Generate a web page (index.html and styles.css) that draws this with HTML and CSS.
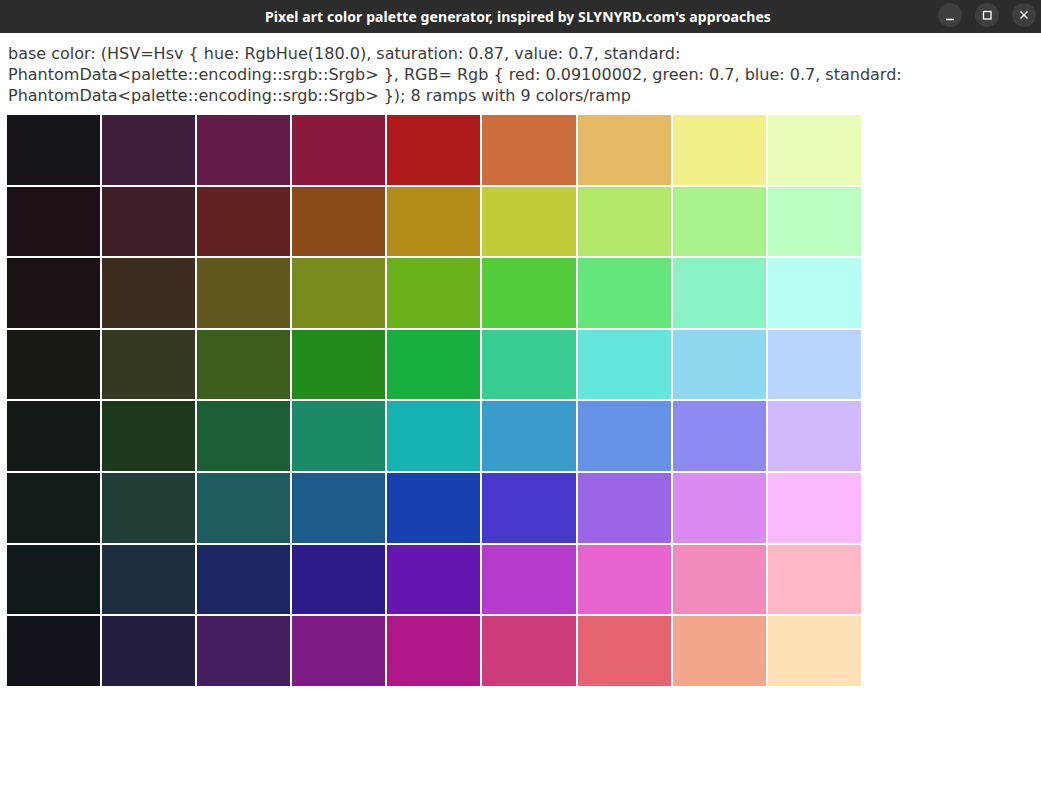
FILE: index.html
```html
<!DOCTYPE html>
<html>
<head>
<meta charset="utf-8">
<link rel="stylesheet" href="styles.css">
</head>
<body>
<div class="titlebar">
  <div class="title">Pixel art color palette generator, inspired by SLYNYRD.com's approaches</div>
  <div class="controls">
    <div class="btn"><svg width="24" height="24" viewBox="0 0 24 24"><path d="M8 16.5h8" stroke="#fff" stroke-width="1.5"/></svg></div>
    <div class="btn"><svg width="24" height="24" viewBox="0 0 24 24"><rect x="8.5" y="8.5" width="7.5" height="7.5" fill="none" stroke="#fff" stroke-width="1.3"/></svg></div>
    <div class="btn"><svg width="24" height="24" viewBox="0 0 24 24"><path d="M8.5 8.5l7 7M15.5 8.5l-7 7" stroke="#fff" stroke-width="1.5"/></svg></div>
  </div>
</div>
<main class="content">
  <p class="info">base color: (HSV=Hsv { hue: RgbHue(180.0), saturation: 0.87, value: 0.7, standard:<br>PhantomData&lt;palette::encoding::srgb::Srgb&gt; }, RGB= Rgb { red: 0.09100002, green: 0.7, blue: 0.7, standard:<br>PhantomData&lt;palette::encoding::srgb::Srgb&gt; }); 8 ramps with 9 colors/ramp</p>
  <div class="grid">
    <div class="c" style="background:#17131b"></div><div class="c" style="background:#3f1e3e"></div><div class="c" style="background:#621c4a"></div><div class="c" style="background:#8a1b3c"></div><div class="c" style="background:#ae1919"></div><div class="c" style="background:#cd6c3c"></div><div class="c" style="background:#e6b965"></div><div class="c" style="background:#f1ef8a"></div><div class="c" style="background:#e9fdb8"></div>
    <div class="c" style="background:#1a1015"></div><div class="c" style="background:#3d1f25"></div><div class="c" style="background:#61221e"></div><div class="c" style="background:#8b4a18"></div><div class="c" style="background:#b48b18"></div><div class="c" style="background:#c3cd3b"></div><div class="c" style="background:#b4e86a"></div><div class="c" style="background:#a8f28b"></div><div class="c" style="background:#baffbf"></div>
    <div class="c" style="background:#1a1212"></div><div class="c" style="background:#3e2d1f"></div><div class="c" style="background:#62581e"></div><div class="c" style="background:#788b1d"></div><div class="c" style="background:#68b11b"></div><div class="c" style="background:#53cd3b"></div><div class="c" style="background:#64e67a"></div><div class="c" style="background:#8af3c3"></div><div class="c" style="background:#b8fff3"></div>
    <div class="c" style="background:#191913"></div><div class="c" style="background:#363822"></div><div class="c" style="background:#3b5e1d"></div><div class="c" style="background:#238a1b"></div><div class="c" style="background:#17b03e"></div><div class="c" style="background:#3acd92"></div><div class="c" style="background:#65e6dd"></div><div class="c" style="background:#8fd9f0"></div><div class="c" style="background:#b8d6fd"></div>
    <div class="c" style="background:#131a16"></div><div class="c" style="background:#1d3a1f"></div><div class="c" style="background:#1c5e36"></div><div class="c" style="background:#1b8a69"></div><div class="c" style="background:#17b3b3"></div><div class="c" style="background:#3b9bcc"></div><div class="c" style="background:#6591e6"></div><div class="c" style="background:#8d8bf2"></div><div class="c" style="background:#d2b8fd"></div>
    <div class="c" style="background:#121c19"></div><div class="c" style="background:#203d37"></div><div class="c" style="background:#1f5c61"></div><div class="c" style="background:#1c5b8b"></div><div class="c" style="background:#1740b0"></div><div class="c" style="background:#463acd"></div><div class="c" style="background:#9a65e6"></div><div class="c" style="background:#d98bf1"></div><div class="c" style="background:#fbb8fd"></div>
    <div class="c" style="background:#10191c"></div><div class="c" style="background:#1f2e3e"></div><div class="c" style="background:#1c2762"></div><div class="c" style="background:#2d1b8a"></div><div class="c" style="background:#6616b0"></div><div class="c" style="background:#b73bcd"></div><div class="c" style="background:#e865cf"></div><div class="c" style="background:#f08bbc"></div><div class="c" style="background:#ffb8c6"></div>
    <div class="c" style="background:#12121b"></div><div class="c" style="background:#241e3e"></div><div class="c" style="background:#441e5e"></div><div class="c" style="background:#7f1b87"></div><div class="c" style="background:#b01789"></div><div class="c" style="background:#cc3b7a"></div><div class="c" style="background:#e6646f"></div><div class="c" style="background:#f2a68b"></div><div class="c" style="background:#ffe1b8"></div>
  </div>
</main>
</body>
</html>
```
FILE: styles.css
```css
html, body {
  margin: 0;
  padding: 0;
  background: #ffffff;
}
.titlebar {
  height: 33px;
  background: #2c2c2c;
  display: flex;
  align-items: center;
  justify-content: center;
  position: relative;
}
.title {
  color: #ffffff;
  font-family: "Noto Sans", "DejaVu Sans", sans-serif;
  font-weight: 700;
  font-size: 14px;
  letter-spacing: 0.07px;
  margin-right: 5px;
}
.controls {
  position: absolute;
  right: 5px;
  top: 3px;
  display: flex;
  gap: 13px;
}
.btn {
  width: 24px;
  height: 24px;
  border-radius: 50%;
  background: #3e3e3e;
  display: flex;
}
.content {
  padding: 10px 7px 0 7px;
}
.info {
  margin: 0 0 0 1px;
  font-family: "DejaVu Sans", sans-serif;
  font-size: 16px;
  line-height: 21px;
  color: #3c3c3c;
}
.grid {
  margin-top: 9px;
  display: grid;
  grid-template-columns: repeat(9, 93.1px);
  grid-template-rows: repeat(8, 69.6px);
  gap: 2px;
}
.c {
  width: 100%;
  height: 100%;
}
```
